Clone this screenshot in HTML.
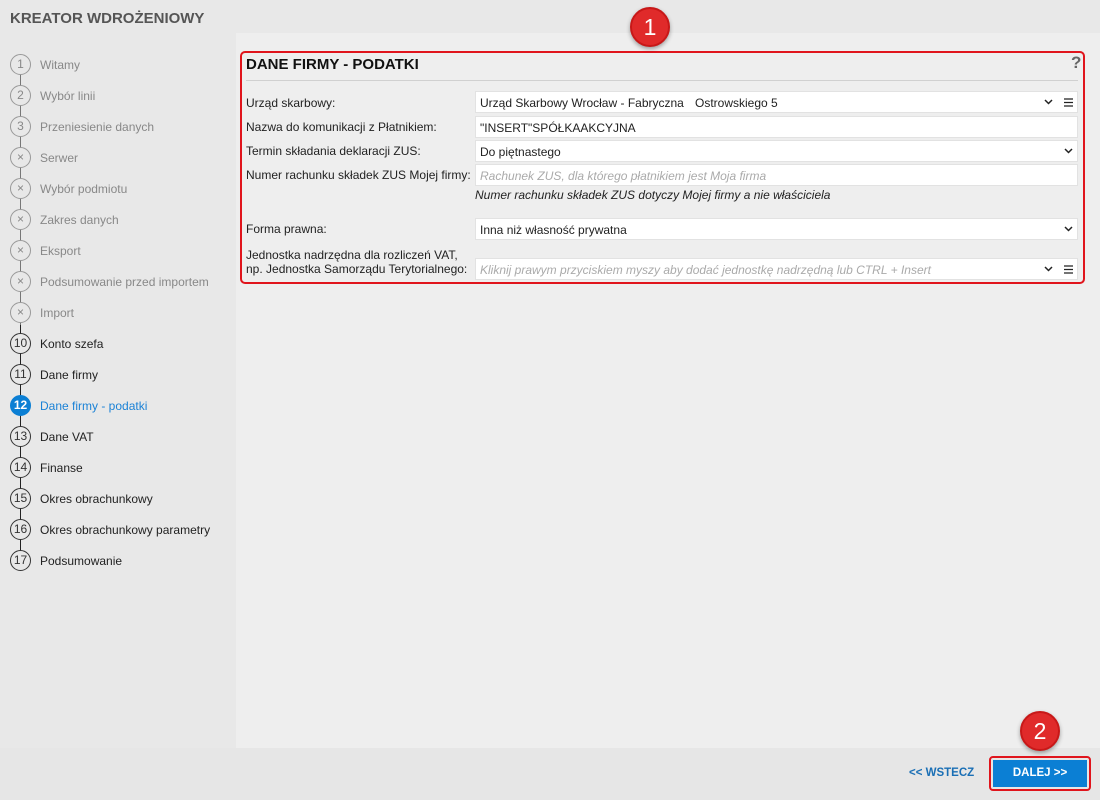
<!DOCTYPE html>
<html><head><meta charset="utf-8"><style>
*{margin:0;padding:0;box-sizing:border-box}
body{width:1100px;height:800px;background:#e8e8e8;font-family:"Liberation Sans","DejaVu Sans",sans-serif;position:relative;overflow:hidden;font-size:12px;color:#222}
.title{position:absolute;left:10px;top:10px;font-weight:bold;font-size:15px;color:#555}
.main{position:absolute;left:236px;top:33px;width:864px;height:715px;background:#eeeeee}
.bottom{position:absolute;left:0;top:748px;width:1100px;height:52px;background:#e6e6e6}
.step{position:absolute;left:10px;height:22px;width:220px}
.c{position:absolute;left:0;top:0;width:21px;height:21px;border-radius:50%;border:1.3px solid #333;background:#e8e8e8;text-align:center;line-height:19px;font-size:12px;color:#333}
.step .t{position:absolute;left:30px;top:4px;font-size:12px;color:#222;white-space:nowrap}
.g .c{border-color:#999;color:#888}
.g .t{color:#888}
.a .c{background:#0b7fd4;border-color:#0b7fd4;color:#fff;font-weight:bold}
.a .t{color:#1b82d6}
.line{position:absolute;left:20px;width:1.3px}
.lbl{position:absolute;left:246px;font-size:12px;color:#222;white-space:nowrap}
.inp{position:absolute;left:475px;width:603px;height:22px;background:#fff;border:1px solid #e2e2e2;font-size:12px;padding:4px 0 0 4px;white-space:nowrap}
.ph{color:#aaa;font-style:italic}
.dd{position:absolute;top:7px}
.red{position:absolute;left:240px;top:51px;width:845px;height:233px;border:2px solid #e0141c;border-radius:5px}
.badge{position:absolute;width:40px;height:40px;border-radius:50%;background:#e02a2a;border:2px solid #c81818;color:#fff;font-size:23px;text-align:center;line-height:36px;box-shadow:0 2px 4px rgba(0,0,0,.35)}
</style></head><body>
<div class="title">KREATOR WDROŻENIOWY</div>
<div class="main"></div>
<div class="bottom"></div>

<div class="line" style="top:75px;height:250px;background:#777"></div>
<div class="line" style="top:325px;height:70px;background:#222"></div>
<div class="line" style="top:395px;height:20px;background:#1b82d6"></div>
<div class="line" style="top:415px;height:145px;background:#222"></div>

<div class="step g" style="top:54px"><div class="c">1</div><div class="t">Witamy</div></div>
<div class="step g" style="top:85px"><div class="c">2</div><div class="t">Wybór linii</div></div>
<div class="step g" style="top:116px"><div class="c">3</div><div class="t">Przeniesienie danych</div></div>
<div class="step g" style="top:147px"><div class="c">×</div><div class="t">Serwer</div></div>
<div class="step g" style="top:178px"><div class="c">×</div><div class="t">Wybór podmiotu</div></div>
<div class="step g" style="top:209px"><div class="c">×</div><div class="t">Zakres danych</div></div>
<div class="step g" style="top:240px"><div class="c">×</div><div class="t">Eksport</div></div>
<div class="step g" style="top:271px"><div class="c">×</div><div class="t">Podsumowanie przed importem</div></div>
<div class="step g" style="top:302px"><div class="c">×</div><div class="t">Import</div></div>
<div class="step" style="top:333px"><div class="c">10</div><div class="t">Konto szefa</div></div>
<div class="step" style="top:364px"><div class="c">11</div><div class="t">Dane firmy</div></div>
<div class="step a" style="top:395px"><div class="c">12</div><div class="t">Dane firmy - podatki</div></div>
<div class="step" style="top:426px"><div class="c">13</div><div class="t">Dane VAT</div></div>
<div class="step" style="top:457px"><div class="c">14</div><div class="t">Finanse</div></div>
<div class="step" style="top:488px"><div class="c">15</div><div class="t">Okres obrachunkowy</div></div>
<div class="step" style="top:519px"><div class="c">16</div><div class="t">Okres obrachunkowy parametry</div></div>
<div class="step" style="top:550px"><div class="c">17</div><div class="t">Podsumowanie</div></div>

<div style="position:absolute;left:246px;top:56px;font-weight:bold;font-size:15px;color:#111">DANE FIRMY - PODATKI</div>
<div style="position:absolute;left:1071px;top:53px;font-weight:bold;font-size:17px;color:#666">?</div>
<div style="position:absolute;left:246px;top:80px;width:832px;height:1px;background:#d0d0d0"></div>

<div class="lbl" style="top:96px">Urząd skarbowy:</div>
<div class="inp" style="top:91px">Urząd Skarbowy Wrocław - Fabryczna<span style="position:absolute;left:219px;top:4px">Ostrowskiego 5</span>
<svg class="dd" style="left:568px" width="9" height="6"><path d="M1 1L4.5 4.5L8 1" stroke="#222" stroke-width="1.5" fill="none"/></svg>
<svg class="dd" style="left:588px;top:6px" width="9" height="9"><path d="M0 1H9M0 4.5H9M0 8H9" stroke="#222" stroke-width="1.2"/></svg></div>
<div class="lbl" style="top:120px">Nazwa do komunikacji z Płatnikiem:</div>
<div class="inp" style="top:116px">"INSERT"SPÓŁKAAKCYJNA</div>
<div class="lbl" style="top:144px">Termin składania deklaracji ZUS:</div>
<div class="inp" style="top:140px">Do piętnastego<svg class="dd" style="left:588px" width="9" height="6"><path d="M1 1L4.5 4.5L8 1" stroke="#222" stroke-width="1.5" fill="none"/></svg></div>
<div class="lbl" style="top:168px">Numer rachunku składek ZUS Mojej firmy:</div>
<div class="inp ph" style="top:164px">Rachunek ZUS, dla którego płatnikiem jest Moja firma</div>
<div style="position:absolute;left:475px;top:188px;font-style:italic;font-size:12px;color:#222">Numer rachunku składek ZUS dotyczy Mojej firmy a nie właściciela</div>
<div class="lbl" style="top:222px">Forma prawna:</div>
<div class="inp" style="top:218px">Inna niż własność prywatna<svg class="dd" style="left:588px" width="9" height="6"><path d="M1 1L4.5 4.5L8 1" stroke="#222" stroke-width="1.5" fill="none"/></svg></div>
<div class="lbl" style="top:248px;line-height:14px">Jednostka nadrzędna dla rozliczeń VAT,<br>np. Jednostka Samorządu Terytorialnego:</div>
<div class="inp ph" style="top:258px">Kliknij prawym przyciskiem myszy aby dodać jednostkę nadrzędną lub CTRL + Insert
<svg class="dd" style="left:568px" width="9" height="6"><path d="M1 1L4.5 4.5L8 1" stroke="#222" stroke-width="1.5" fill="none"/></svg>
<svg class="dd" style="left:588px;top:6px" width="9" height="9"><path d="M0 1H9M0 4.5H9M0 8H9" stroke="#222" stroke-width="1.2"/></svg></div>

<div class="red"></div>
<div class="badge" style="left:630px;top:7px">1</div>
<div class="badge" style="left:1020px;top:711px">2</div>

<div style="position:absolute;left:909px;top:767px;font-weight:bold;font-size:11.5px;color:#1a6fb5">&lt;&lt; WSTECZ</div>
<div style="position:absolute;left:989px;top:756px;width:102px;height:35px;border:2px solid #e0141c;border-radius:4px;padding:2px">
<div style="width:100%;height:100%;background:#0b7fd4;color:#fff;font-weight:bold;font-size:11.5px;text-align:center;line-height:27px">DALEJ &gt;&gt;</div></div>
</body></html>
